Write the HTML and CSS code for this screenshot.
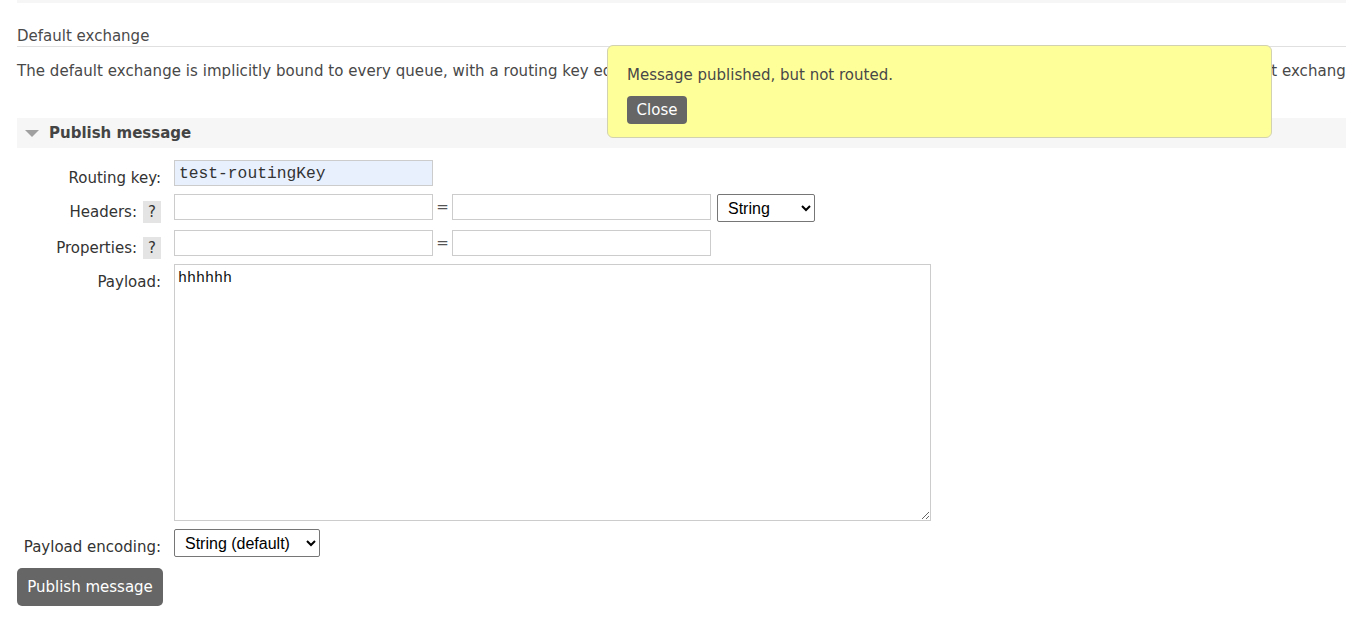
FILE: index.html
```html
<!DOCTYPE html>
<html>
<head>
<meta charset="utf-8">
<title>Default exchange</title>
<link rel="stylesheet" href="styles.css">
</head>
<body>
<div class="page">
  <div class="prev-section"></div>
  <h2 class="title">Default exchange</h2>
  <p class="desc">The default exchange is implicitly bound to every queue, with a routing key equal to the queue name. It is not possible to explicitly bind to, or unbind from the default exchange. It also cannot be deleted.</p>

  <div class="section-head">
    <span class="tri"></span>
    <span class="section-title">Publish message</span>
  </div>

  <form class="pub-form">
    <div class="label">Routing key:</div>
    <div class="field"><input class="txt autofill" type="text" value="test-routingKey"></div>

    <div class="label">Headers:<span class="help">?</span></div>
    <div class="field">
      <input class="txt" type="text">
      <span class="eq">=</span>
      <input class="txt" type="text">
      <select class="sel sel-type"><option>String</option></select>
    </div>

    <div class="label">Properties:<span class="help">?</span></div>
    <div class="field">
      <input class="txt" type="text">
      <span class="eq">=</span>
      <input class="txt" type="text">
    </div>

    <div class="label">Payload:</div>
    <div class="field"><textarea class="payload">hhhhhh</textarea></div>

    <div class="label">Payload encoding:</div>
    <div class="field"><select class="sel sel-enc"><option>String (default)</option></select></div>
  </form>
  <button class="btn btn-publish" type="button">Publish message</button>
</div>

<div class="popup">
  <p class="popup-msg">Message published, but not routed.</p>
  <button class="btn btn-close" type="button">Close</button>
</div>
</body>
</html>
```
FILE: styles.css
```css
html, body {
  margin: 0;
  padding: 0;
  overflow: hidden;
  background: #fff;
}
body {
  font-family: "DejaVu Sans", Verdana, sans-serif;
  font-size: 15px;
  line-height: 18px;
  color: #484848;
}
.page {
  padding-left: 17px;
  width: 1500px;
}
.prev-section {
  height: 3px;
  background: #f6f6f6;
}
.title {
  margin: 24px 0 0 0;
  font-size: 15px;
  font-weight: normal;
  line-height: 18px;
  padding-bottom: 1px;
  border-bottom: 1px solid #e0e0e0;
  color: #4a4a4a;
}
.desc {
  margin: 15px 0 0 0;
  white-space: nowrap;
  letter-spacing: 0.05px;
}
.section-head {
  margin-top: 38px;
  height: 30px;
  background: #f6f6f6;
  display: flex;
  align-items: center;
}
.tri {
  width: 0;
  height: 0;
  margin-left: 8px;
  margin-top: 1px;
  border-left: 7px solid transparent;
  border-right: 7px solid transparent;
  border-top: 7px solid #a0a0a0;
}
.section-title {
  margin-left: 10px;
  font-weight: bold;
  color: #444;
}
.pub-form {
  margin: 12px 0 0 0;
  display: grid;
  grid-template-columns: 144px auto;
  column-gap: 13px;
  row-gap: 8px;
  justify-content: start;
}
.label {
  box-sizing: border-box;
  height: 26px;
  text-align: right;
  padding-top: 7px;
  line-height: 22px;
  color: #333;
  white-space: nowrap;
}
.help {
  display: inline-block;
  width: 18px;
  height: 22px;
  line-height: 22px;
  text-align: center;
  background: #e4e4e4;
  margin-left: 6px;
  vertical-align: top;
}
.field {
  display: flex;
  align-items: flex-start;
}
.txt {
  box-sizing: border-box;
  width: 259px;
  height: 26px;
  margin: 0;
  padding: 0 4px;
  border: 1px solid #cccccc;
  background: #fff;
  font-family: "Liberation Mono", "Courier New", monospace;
  font-size: 16.3px;
  color: #333;
  outline: none;
}
.autofill {
  background: #e8f0fe;
}
.eq {
  width: 19px;
  text-align: center;
  line-height: 26px;
  color: #555;
}
.sel {
  box-sizing: border-box;
  height: 28px;
  margin: 0;
  font-family: "Liberation Sans", Arial, sans-serif;
  font-size: 16px;
  color: #000;
  background: #fff;
  border: 1px solid #767676;
  border-radius: 2px;
  padding: 0 4px 0 6px;
}
.sel-type {
  width: 98px;
  margin-left: 6px;
}
.sel-enc {
  width: 146px;
}
.payload {
  box-sizing: border-box;
  display: block;
  width: 757px;
  height: 257px;
  margin: 0;
  padding: 5px 3px;
  border: 1px solid #cccccc;
  font-family: "Liberation Mono", "Courier New", monospace;
  font-size: 15px;
  line-height: 18px;
  color: #111;
  resize: both;
  outline: none;
}
.btn {
  border: none;
  background: #666666;
  color: #fff;
  font-family: "DejaVu Sans", Verdana, sans-serif;
  font-size: 15px;
  line-height: 18px;
  border-radius: 5px;
  cursor: pointer;
  margin: 0;
}
.btn-publish {
  display: block;
  margin-top: 11px;
  width: 146px;
  height: 38px;
  padding: 0;
}
.popup {
  position: absolute;
  left: 607px;
  top: 45px;
  box-sizing: border-box;
  width: 665px;
  height: 93px;
  background: #ffff99;
  border: 1px solid #d2d2b0;
  border-radius: 6px;
  padding: 20px 19px 0 19px;
}
.popup-msg {
  margin: 0;
  line-height: 18px;
}
.btn-close {
  margin-top: 12px;
  width: 60px;
  height: 28px;
  padding: 0;
  border-radius: 4px;
}
```
